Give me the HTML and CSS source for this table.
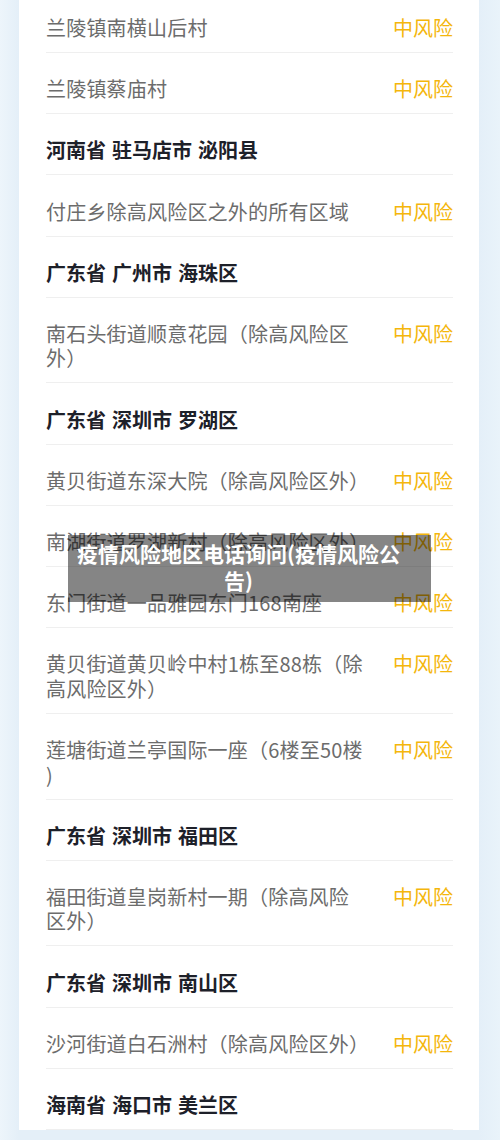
FILE: index.html
```html
<!DOCTYPE html>
<html lang="zh-CN">
<head>
<meta charset="utf-8">
<title>疫情风险地区</title>
<link rel="stylesheet" href="styles.css">
</head>
<body>
<div class="screen">
  <div class="card">
    <div class="row"><div class="name">兰陵镇南横山后村</div><div class="risk">中风险</div></div>
    <div class="row"><div class="name">兰陵镇蔡庙村</div><div class="risk">中风险</div></div>
    <div class="row head">河南省 驻马店市 泌阳县</div>
    <div class="row"><div class="name">付庄乡除高风险区之外的所有区域</div><div class="risk">中风险</div></div>
    <div class="row head">广东省 广州市 海珠区</div>
    <div class="row"><div class="name">南石头街道顺意花园（除高风险区<br>外）</div><div class="risk">中风险</div></div>
    <div class="row head">广东省 深圳市 罗湖区</div>
    <div class="row"><div class="name">黄贝街道东深大院（除高风险区外）</div><div class="risk">中风险</div></div>
    <div class="row"><div class="name">南湖街道罗湖新村（除高风险区外）</div><div class="risk">中风险</div></div>
    <div class="row"><div class="name">东门街道一品雅园东门168南座</div><div class="risk">中风险</div></div>
    <div class="row"><div class="name">黄贝街道黄贝岭中村1栋至88栋（除<br>高风险区外）</div><div class="risk">中风险</div></div>
    <div class="row"><div class="name">莲塘街道兰亭国际一座（6楼至50楼<br>)</div><div class="risk">中风险</div></div>
    <div class="row head">广东省 深圳市 福田区</div>
    <div class="row"><div class="name">福田街道皇岗新村一期（除高风险<br>区外）</div><div class="risk">中风险</div></div>
    <div class="row head">广东省 深圳市 南山区</div>
    <div class="row"><div class="name">沙河街道白石洲村（除高风险区外）</div><div class="risk">中风险</div></div>
    <div class="row head">海南省 海口市 美兰区</div>
  </div>
  <div class="caption">疫情风险地区电话询问(疫情风险公<br>告)</div>
</div>
</body>
</html>
```

FILE: styles.css
```css
html, body {
  margin: 0;
  padding: 0;
  background: #e7f1f9;
}

.screen {
  position: relative;
  width: 500px;
  height: 1140px;
  overflow: hidden;
  background: linear-gradient(90deg, #edf5fb 0, #e4eff8 19px, #e4eff8 479px, #e9f3fa 500px);
  font-family: "Noto Sans CJK SC", "Noto Sans", sans-serif;
}

.card {
  margin: -8.2px 21px 0 19px;
  padding: 0 26px 0 27px;
  background: #ffffff;
}

.row {
  display: flex;
  align-items: flex-start;
  gap: 20px;
  padding: 24.2px 0 11.5px;
  border-bottom: 1px solid #efefef;
  font-size: 20px;
  line-height: 24.5px;
}

.name {
  flex: 1;
  color: #6c6c6c;
  letter-spacing: 0.2px;
}

.risk {
  flex: none;
  color: #f4b60c;
}

.head {
  font-weight: 700;
  color: #1d2029;
  word-spacing: 1.5px;
}

.caption {
  position: absolute;
  left: 68px;
  top: 535px;
  width: 363px;
  box-sizing: border-box;
  padding: 5px 22px 8px 0;
  background: rgba(0, 0, 0, 0.48);
  color: #ffffff;
  font-size: 21px;
  font-weight: 700;
  line-height: 27px;
  text-align: center;
}
```
